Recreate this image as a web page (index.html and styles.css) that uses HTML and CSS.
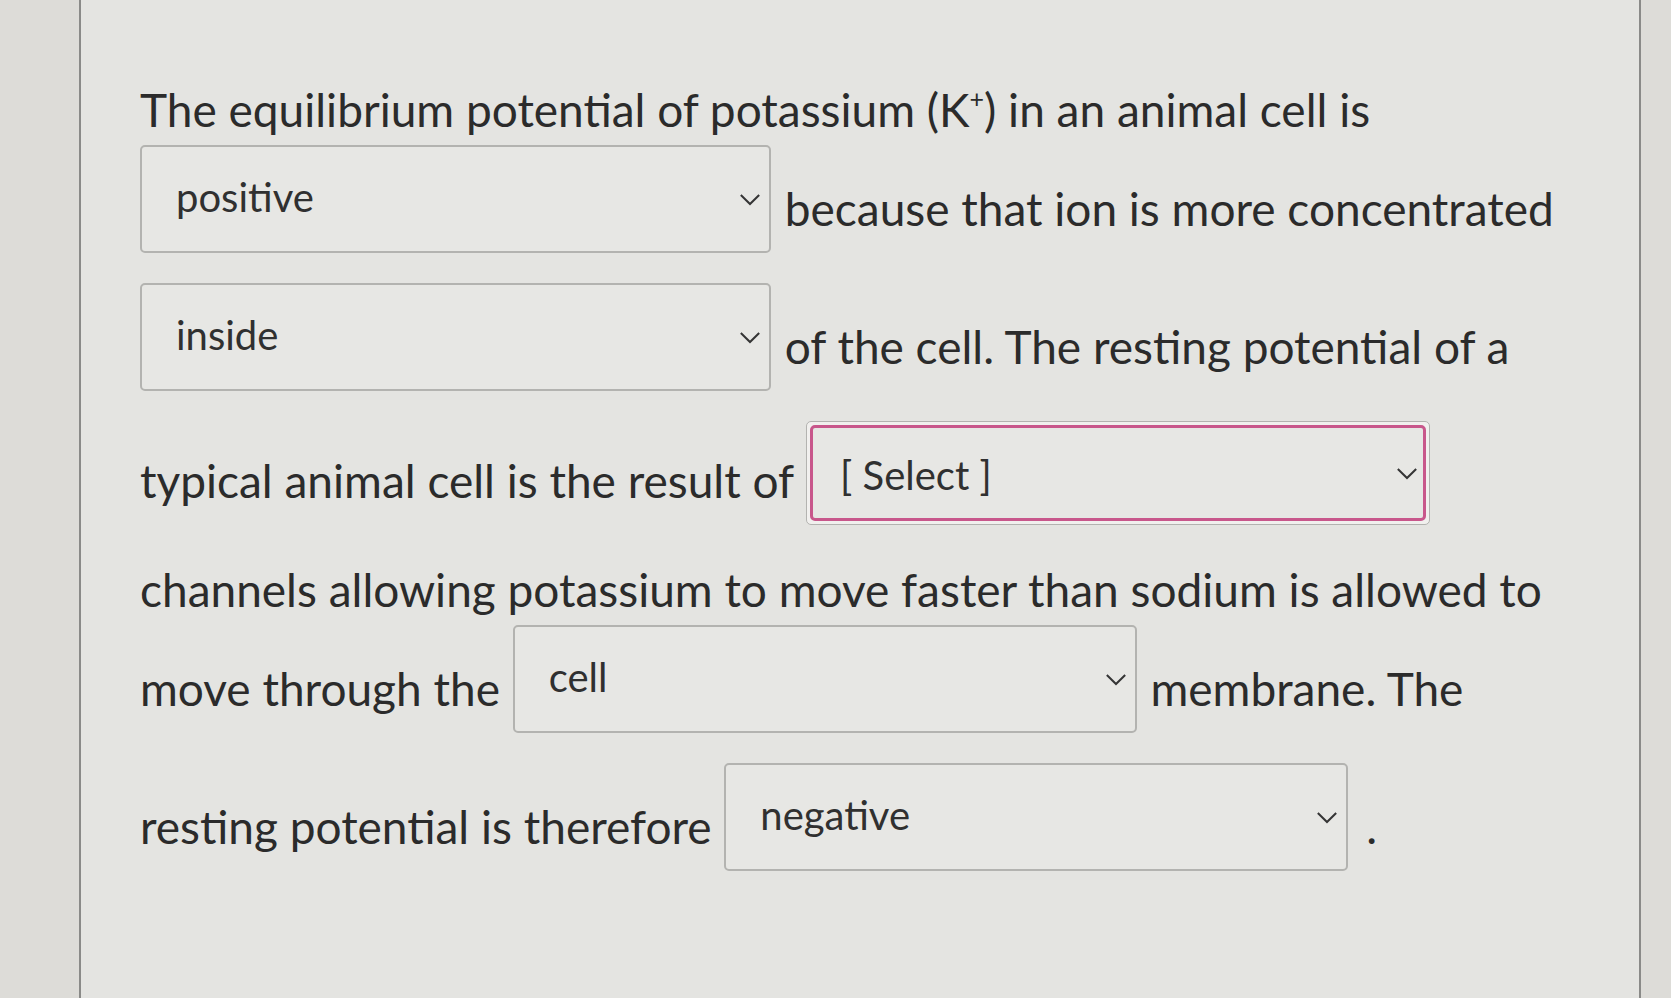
FILE: index.html
```html
<!DOCTYPE html>
<html lang="en">
<head>
<meta charset="utf-8">
<title>Quiz question</title>
<link rel="stylesheet" href="styles.css">
</head>
<body>
<div class="page">
  <div class="panel">
    <p class="question">The equilibrium potential of potassium (K<sup>+</sup>) in an animal cell is<br><span class="select"><span class="sel-inner"><span class="sel-text">positive</span><svg class="chev" viewBox="0 0 24 14" width="22" height="13"><path d="M2 2 L12 12 L22 2"/></svg></span></span> because that ion is more concentrated<br><span class="select"><span class="sel-inner"><span class="sel-text">inside</span><svg class="chev" viewBox="0 0 24 14" width="22" height="13"><path d="M2 2 L12 12 L22 2"/></svg></span></span> of the cell. The resting potential of a<br>typical animal cell is the result of <span class="select mid focus"><span class="sel-inner"><span class="sel-text">[ Select ]</span><svg class="chev" viewBox="0 0 24 14" width="22" height="13"><path d="M2 2 L12 12 L22 2"/></svg></span></span><br>channels allowing potassium to move faster than sodium is allowed to<br>move through the <span class="select mid"><span class="sel-inner"><span class="sel-text">cell</span><svg class="chev" viewBox="0 0 24 14" width="22" height="13"><path d="M2 2 L12 12 L22 2"/></svg></span></span> membrane. The<br>resting potential is therefore <span class="select mid last"><span class="sel-inner"><span class="sel-text">negative</span><svg class="chev" viewBox="0 0 24 14" width="22" height="13"><path d="M2 2 L12 12 L22 2"/></svg></span></span> .</p>
  </div>
</div>
</body>
</html>
```

FILE: styles.css
```css
html, body {
  margin: 0;
  padding: 0;
}
body {
  background: #dddcd8;
  font-family: Lato, "Noto Sans", sans-serif;
  color: #2b2b2b;
}
.page {
  height: 998px;
  overflow: hidden;
  display: flex;
}
.panel {
  margin-left: 79px;
  width: 1562px;
  height: 998px;
  box-sizing: border-box;
  background: #e4e4e1;
  border-left: 2px solid #8a8a88;
  border-right: 2px solid #8a8a88;
  padding: 75px 0 0 59px;
}
.question {
  margin: 0;
  font-size: 46px;
  line-height: 70px;
  white-space: nowrap;
}
.question sup {
  font-size: 25px;
  line-height: 0;
  vertical-align: 19px;
}
.select {
  display: inline-block;
  overflow: hidden;
  box-sizing: border-box;
  width: 631px;
  height: 108px;
  margin: 0 2px 30px 0;
  vertical-align: -57px;
  border: 2px solid #b3b3b0;
  border-radius: 5px;
  background: #e7e7e4;
  line-height: 44px;
  color: #303030;
}
.select.mid {
  margin-left: 1px;
  width: 624px;
}
.select.last {
  margin-right: 6px;
}
.sel-inner {
  display: flex;
  align-items: center;
  justify-content: space-between;
  height: 100%;
  box-sizing: border-box;
  padding: 0 8px 0 34px;
}
.sel-text {
  font-size: 40px;
  align-self: flex-start;
  padding-top: 28px;
}
.chev {
  fill: none;
  stroke: #353535;
  stroke-width: 2.2;
}
.select.focus {
  border: 1px solid #b3b3b0;
  padding: 3px;
  background: #f1f0ee;
  height: 104px;
}
.select.focus .sel-inner {
  border: 3px solid #c8578b;
  border-radius: 5px;
  background: #e7e7e4;
  padding: 0 5px 0 27px;
}
.select.focus .sel-text {
  padding-top: 25px;
}
```
